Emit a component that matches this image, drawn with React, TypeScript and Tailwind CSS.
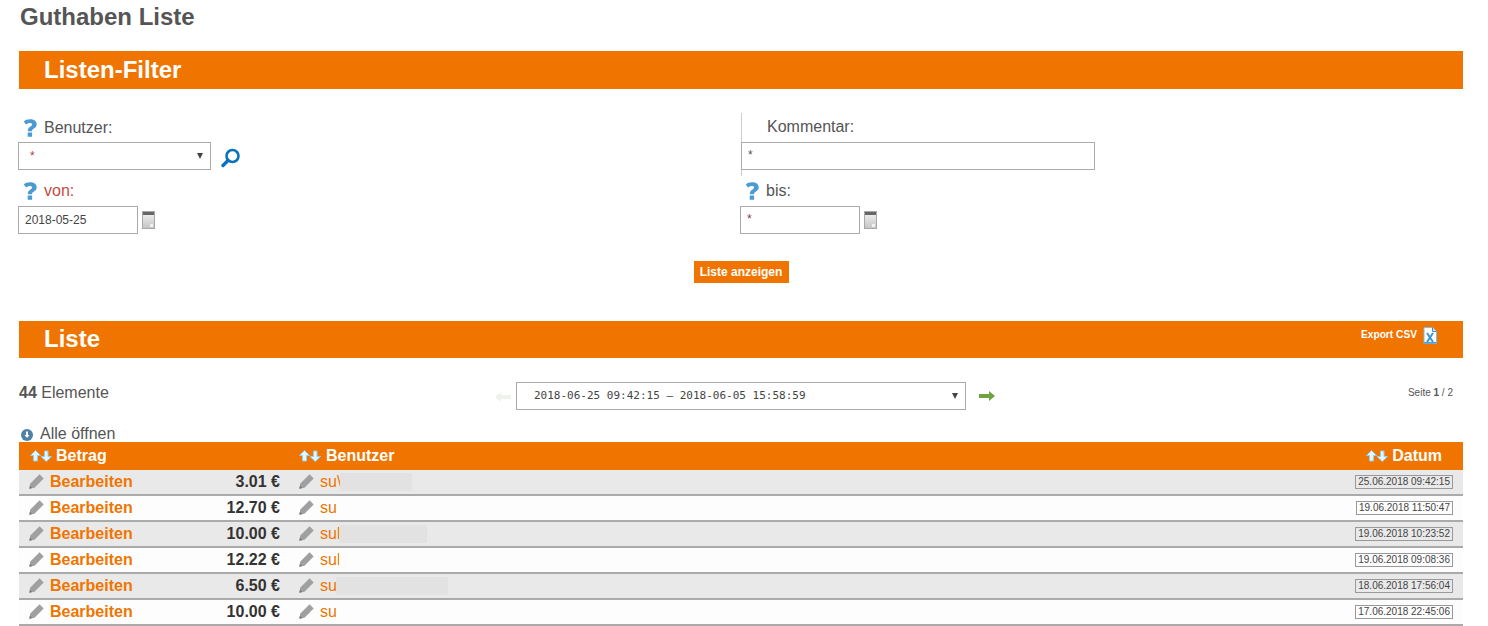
const rows = [
  { amount: '3.01 €', user: 'su\\', blur: 'w-[72px] bg-[#e2e2e2]', date: '25.06.2018 09:42:15' },
  { amount: '12.70 €', user: 'su', blur: 'w-[92px] bg-[#fdfdfd]', date: '19.06.2018 11:50:47' },
  { amount: '10.00 €', user: 'sul', blur: 'w-[88px] bg-[#e2e2e2]', date: '19.06.2018 10:23:52' },
  { amount: '12.22 €', user: 'sul', blur: 'w-[88px] bg-[#fdfdfd]', date: '19.06.2018 09:08:36' },
  { amount: '6.50 €', user: 'su', blur: 'w-[112px] bg-[#e2e2e2]', date: '18.06.2018 17:56:04' },
  { amount: '10.00 €', user: 'su', blur: 'w-[118px] bg-[#fdfdfd]', date: '17.06.2018 22:45:06' },
];

const SectionBar = (props: { title: string; className: string; titleClass: string; children?: React.ReactNode }) => {
  return (
    <div className={`flex justify-between bg-[#f07500] pl-[25px] pr-[26px] ${props.className}`}>
      <h2 className={`text-[24px] font-bold text-white ${props.titleClass}`}>{props.title}</h2>
      {props.children}
    </div>
  );
};

const Help = () => (
  <svg width="18" height="18" viewBox="0 0 18 18" className="shrink-0">
    <path
      d="M2.800 2.400C4.200 1.200 6.300 .3 9 .3 12.900 .3 15.700 2.200 15.700 5.300 15.700 7.500 14.500 8.600 12.700 9.800 11.400 10.600 11 11.100 11 12.300H6.800C6.800 10 7.500 8.800 9.200 7.700 10.500 6.800 11.100 6.300 11.100 5.500 11.100 4.500 10.300 3.900 8.900 3.900 7.500 3.900 6.200 4.500 5 5.500ZM6.700 13.500H11.100V17.700H6.700Z"
      fill="#4a9bd4"
    />
  </svg>
);

const Pencil = () => (
  <svg width="15" height="15" viewBox="0 0 15 15" className="mt-[-2px] shrink-0">
    <path d="M.3 14.700 1.300 9.500 10.600 .3 14.700 4.400 5.500 13.700Z" fill="#a0a0a0" />
    <path d="M.3 14.700 1 11.800 3.200 14Z" fill="#777" />
  </svg>
);

const Calendar = () => (
  <svg width="13" height="18" viewBox="0 0 13 18" className="ml-[4px] mt-[-1px]">
    <defs>
      <linearGradient id="cal" x1="0" y1="0" x2="0" y2="1">
        <stop offset="0" stopColor="#f4f4f4" />
        <stop offset="1" stopColor="#c4c4c4" />
      </linearGradient>
    </defs>
    <rect x="0.5" y="0.5" width="12" height="17" fill="url(#cal)" stroke="#a8a8a8" />
    <rect x="1" y="1" width="11" height="3" fill="#666" />
    <rect x="8" y="13" width="3" height="3" fill="#f2f2f2" />
  </svg>
);

const SearchIcon = () => (
  <svg width="20" height="20" viewBox="0 0 20 20" className="ml-[10px] mt-[6px]">
    <circle cx="11.500" cy="8" r="6" fill="none" stroke="#0a72bd" strokeWidth="2.600" />
    <path d="M7 12.500 2 17.500" stroke="#0a72bd" strokeWidth="3.400" strokeLinecap="round" />
  </svg>
);

const SortArrows = () => (
  <svg width="22" height="12" viewBox="0 0 22 12" className="shrink-0">
    <path d="M5.500 .5 10.500 5.500H7.500V11H3.500V5.500H.5Z" fill="#e6f6ff" stroke="#8fd0f6" />
    <path d="M14.500 1H18V6.500H21.500L16.250 11.500 11 6.500H14.500Z" fill="#e6f6ff" stroke="#8fd0f6" />
  </svg>
);

const ExcelIcon = () => (
  <svg width="14" height="17" viewBox="0 0 14 17">
    <path d="M1 .5H9.500L13.500 4.500V16.500H1Z" fill="#fff" stroke="#7fbce6" />
    <path d="M9.500 .5V4.500H13.500" fill="#cfe6f6" stroke="#3f8fca" />
    <path d="M4 6 10 15M10 6 4 15" stroke="#3f93d0" strokeWidth="2" />
    <rect x="1" y="15" width="12.500" height="1.500" fill="#4f9fd8" />
  </svg>
);

const Select = (props: { className: string; text: string; textClass: string }) => (
  <div className={`flex items-center justify-between border border-[#aaaaaa] bg-white ${props.className}`}>
    <span className={props.textClass}>{props.text}</span>
    <span className="mt-[-1px] border-x-[3px] border-t-[6px] border-x-transparent border-t-[#444]" />
  </div>
);

export default function App() {
  return (
    <div className="h-[626px] overflow-hidden bg-white pl-[19px] pr-[25px] font-['Liberation_Sans',Arial,sans-serif] text-[#555]">
      <h1 className="h-[34px] pl-[1px] pt-[3px] text-[24px] font-bold leading-[28px] text-[#555]">Guthaben Liste</h1>
      <SectionBar title="Listen-Filter" className="mt-[17px] h-[38px]" titleClass="leading-[37px]" />

      <div className="mt-[24px] grid grid-cols-[722px_1fr]">
        <div>
          <div className="flex h-[29px] items-center pl-[2px] pt-[1px]">
            <Help />
            <span className="ml-[5px] text-[16px]">Benutzer:</span>
          </div>
          <div className="ml-[-1px] flex">
            <Select
              className="h-[28px] w-[193px] pl-[11px] pr-[7px]"
              text="*"
              textClass="mt-[-1px] text-[12px] text-[#b5403a]"
            />
            <SearchIcon />
          </div>
        </div>
        <div className="h-[63px] border-l border-[#cccccc]">
          <div className="h-[29px] pl-[25px] pt-[4px] text-[16px] leading-[20px]">Kommentar:</div>
          <div className="ml-[-1px] h-[28px] w-[354px] border border-[#aaaaaa] pl-[6px] text-[12px] leading-[25px] text-[#555]">*</div>
        </div>
      </div>

      <div className="mt-[-1px] grid grid-cols-[721px_1fr]">
        <div>
          <div className="flex h-[31px] items-center pl-[2px]">
            <Help />
            <span className="ml-[5px] text-[16px] text-[#c44b3f]">von:</span>
          </div>
          <div className="ml-[-1px] flex items-center">
            <div className="h-[28px] w-[120px] border border-[#aaaaaa] pl-[6px] text-[12px] leading-[26px] text-[#444]">2018-05-25</div>
            <Calendar />
          </div>
        </div>
        <div>
          <div className="flex h-[31px] items-center pl-[3px]">
            <Help />
            <span className="ml-[5px] text-[16px]">bis:</span>
          </div>
          <div className="flex items-center">
            <div className="h-[28px] w-[120px] border border-[#aaaaaa] pl-[6px] text-[12px] leading-[25px] text-[#8a3a35]">*</div>
            <Calendar />
          </div>
        </div>
      </div>

      <div className="mt-[27px] flex justify-center">
        <button className="h-[22px] w-[95px] bg-[#f07500] text-[12px] font-bold text-white">Liste anzeigen</button>
      </div>

      <SectionBar title="Liste" className="mt-[38px] h-[37px]" titleClass="leading-[35px]">
        <div className="flex items-start gap-[6px] pt-[6px]">
          <span className="text-[10.200px] font-bold leading-[16px] text-white">Export CSV</span>
          <ExcelIcon />
        </div>
      </SectionBar>

      <div className="mt-[24px] grid h-[40px] grid-cols-[1fr_auto_1fr]">
        <div className="text-[16px] leading-[22px]">
          <b>44</b> Elemente
        </div>
        <div className="ml-[8px] flex items-start">
          <svg width="16" height="12" viewBox="0 0 16 12" className="mt-[9px]">
            <path d="M0 6 6 1V4H16V8H6V11Z" fill="#eef3ec" />
          </svg>
          <Select
            className="ml-[5px] h-[28px] w-[450px] pl-[17px] pr-[7px]"
            text="2018-06-25 09:42:15 – 2018-06-05 15:58:59"
            textClass="font-['DejaVu_Sans_Mono',monospace] text-[11px] text-[#444]"
          />
          <svg width="16" height="12" viewBox="0 0 16 12" className="ml-[13px] mt-[8px]">
            <path d="M0 4H10V1L16 6 10 11V8H0Z" fill="#6fa33f" />
          </svg>
        </div>
        <div className="pr-[10px] text-right text-[10px] leading-[22px]">
          Seite <b>1</b> / 2
        </div>
      </div>

      <div className="flex h-[20px] items-center gap-[7px] pl-[2px] pt-[3px]">
        <svg width="12" height="12" viewBox="0 0 12 12" className="mt-[3px]">
          <circle cx="6" cy="6" r="6" fill="#4f80a8" />
          <path d="M5 2.500H7V6H8.500L6 9 3.500 6H5Z" fill="#fff" />
        </svg>
        <span className="text-[16px] leading-[18px]">Alle öffnen</span>
      </div>

      <div className="flex h-[28px] items-center bg-[#f07500] pl-[11px] pr-[21px] text-[16px] font-bold text-white">
        <div className="flex w-[269px] items-center gap-[4px]">
          <SortArrows />
          Betrag
        </div>
        <div className="flex flex-1 items-center gap-[5px]">
          <SortArrows />
          Benutzer
        </div>
        <div className="flex items-center gap-[4px]">
          <SortArrows />
          Datum
        </div>
      </div>

      {rows.map((row, i) => (
        <div
          key={row.date}
          className={`flex h-[26px] items-center border-b-2 border-[#aaaaaa] pl-[10px] pr-[10px] ${i % 2 ? 'bg-[#fdfdfd]' : 'bg-[#e9e9e9]'}`}
        >
          <div className="flex w-[251px] items-center">
            <Pencil />
            <span className="ml-[6px] flex-1 text-[16px] font-bold text-[#f07500]">Bearbeiten</span>
            <span className="text-[16px] font-bold text-[#333]">{row.amount}</span>
          </div>
          <div className="ml-[19px] flex flex-1 items-center">
            <Pencil />
            <span className="ml-[6px] text-[16px] text-[#f07500]">{row.user}</span>
            <span className={`ml-[-1px] h-[18px] ${row.blur}`} />
          </div>
          <span className="border border-[#999] px-[2px] text-[10px] leading-[12px] text-[#444]">{row.date}</span>
        </div>
      ))}
    </div>
  );
}
